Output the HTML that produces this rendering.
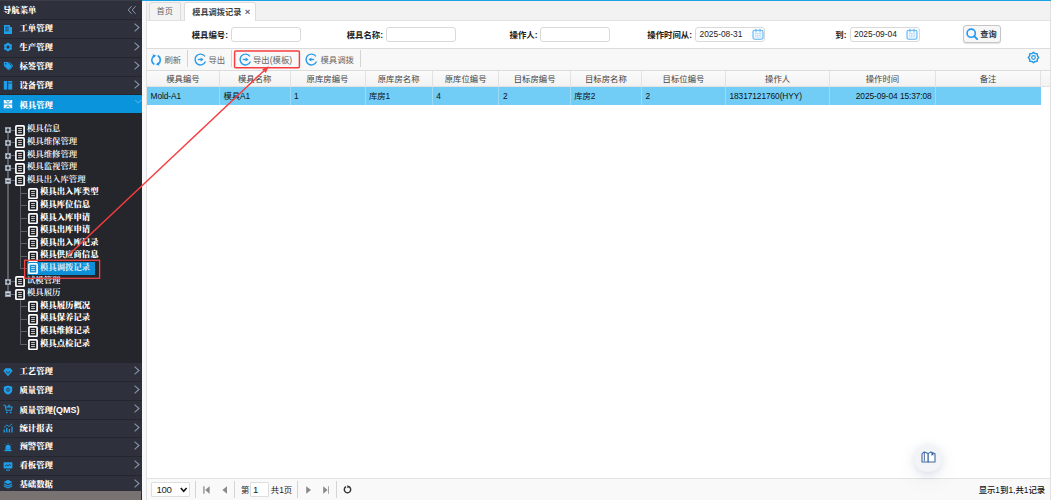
<!DOCTYPE html>
<html lang="zh-CN">
<head>
<meta charset="utf-8">
<title>模具调拨记录</title>
<style>
*{box-sizing:border-box;margin:0;padding:0}
html,body{width:1051px;height:500px;overflow:hidden;background:#fff;font-family:"Liberation Sans","Noto Sans CJK SC",sans-serif;font-size:8.4px;color:#222}
.abs{position:absolute}
#side{position:absolute;left:0;top:0;width:141.700px;height:500px;background:#25262b;overflow:hidden;font-family:"Liberation Serif","Noto Serif CJK SC",serif;color:#fff}
#side .hd{position:absolute;left:0;top:0;width:142px;height:19.300px;background:#2e303b;border-top:1px solid #3a3c47;font-weight:900;font-size:8.4px;line-height:20px;padding-left:3px}
#side .hd svg.dbl{position:absolute;left:127px;top:4px;width:10px;height:10px}
.acc{position:absolute;left:0;width:142px;height:18.800px;background:#2e303b;border-top:1px solid #24262e;font-weight:900;font-size:8.4px;line-height:18px;padding-left:19.5px;white-space:nowrap}
.acc.sel{background:#0a94dc;border-top-color:#0a94dc}
.acc svg.ic{position:absolute;left:2.600px;top:3.400px;width:10px;height:10px}
.acc svg.ar{position:absolute;left:133px;top:2px;width:7px;height:11px}
.acc .q{font-family:"Liberation Sans",sans-serif;font-weight:700;font-size:9px}
.tn{position:absolute;height:13px;line-height:13px;font-size:8.4px;white-space:nowrap;color:#fff;font-weight:600}
.tn.b{font-weight:900}
.tn.s{color:#cfe6f4}
.ln{position:absolute;background:#5c5e66}
#sbar{position:absolute;left:0;top:490.500px;width:141px;height:10px;background:#787272}
#gap{position:absolute;left:141.700px;top:0;width:4.900px;height:500px;background:#f8f8f8;border-right:1px solid #e0e0e0}
#topline{position:absolute;left:142px;top:0;width:909px;height:1.200px;background:#1ba3e6}
#tabs{position:absolute;left:146.600px;top:1px;width:904.400px;height:20px;background:#f2f2f2;border-bottom:1px solid #e2e2e2}
.tab{position:absolute;top:2px;height:18px;border:1px solid #dcdcdc;border-bottom:none;border-radius:3px 3px 0 0;background:#f3f3f3;color:#666;font-size:8.2px;line-height:17px;text-align:center;white-space:nowrap}
.tab.on{background:#fff;height:19px;color:#444;line-height:17.600px;font-weight:700;text-align:left;padding-left:7px}
.lbl{position:absolute;top:28px;height:15px;line-height:15px;font-weight:700;font-size:8.400px;white-space:nowrap;text-align:right;color:#222}
.inp{position:absolute;top:26.500px;height:15px;border:1px solid #d9d9d9;border-radius:3px;background:#fff;font-size:8.400px;line-height:13px;padding-left:3.500px;color:#222}
#tb{position:absolute;left:147px;top:47.500px;width:904px;height:23.200px;background:#f8f8f8;border-top:1px solid #dcdcdc;border-bottom:1px solid #dcdcdc}
.tbt{position:absolute;top:55px;height:10px;line-height:10px;font-size:8.400px;color:#666;white-space:nowrap}
.sep{position:absolute;width:1px;background:#d4d4d4}
#gh{position:absolute;left:147px;top:70.600px;width:904px;height:16.400px;background:linear-gradient(#fbfbfb,#f2f2f2);border-bottom:1px solid #e2e2e2}
.th{position:absolute;top:70.600px;height:16.400px;line-height:17.400px;text-align:center;font-size:8.400px;color:#444;border-right:1px solid #e2e2e2;white-space:nowrap}
#row{position:absolute;left:147px;top:87px;width:893.800px;height:17.500px;background:#72cdf6}
.td{position:absolute;top:87px;height:17.500px;line-height:19.500px;font-size:8.400px;color:#111;padding-left:3.500px;border-right:1px solid #9bdaf5;white-space:nowrap;letter-spacing:-.1px}
#pg{position:absolute;left:146.600px;top:477.600px;width:904.400px;height:22.400px;background:#f9f9f9;border-top:1px solid #e2e2e2}
.pt{position:absolute;top:484px;height:11px;line-height:11px;font-size:8.400px;color:#222;white-space:nowrap}
</style>
</head>
<body>
<div id="side">
<div class="hd">导航菜单<svg class="dbl" viewBox="0 0 10 10"><path d="M4.600 1.200L1.200 5l3.400 3.800M8.600 1.200L5.200 5l3.400 3.800" fill="none" stroke="#8a94a8" stroke-width="1"/></svg></div>
<div class="acc" style="top:19.3px"><svg class="ic" viewBox="0 0 10 10"><path d="M1 1h6v2h2v7H1z" fill="#1e9fea"/><path d="M2.2 3.2h3.6M2.2 5h3.6M2.2 6.8h3.6" stroke="#2f313d" stroke-width=".8"/></svg>工单管理<svg class="ar" viewBox="0 0 8 12"><path d="M1.800 1.600L6.800 6 1.800 10.400" fill="none" stroke="#8a94a8" stroke-width="1.300"/></svg></div>
<div class="acc" style="top:38.1px"><svg class="ic" viewBox="0 0 10 10"><g transform="translate(.5 .5) scale(.9)"><circle cx="5" cy="5" r="3.1" fill="none" stroke="#1e9fea" stroke-width="2.2"/><path d="M5 .3v9.4M.9 2.6l8.2 4.8M.9 7.4l8.2-4.8" stroke="#1e9fea" stroke-width="2"/><circle cx="5" cy="5" r="1.700" fill="#2f313d"/></g></svg>生产管理<svg class="ar" viewBox="0 0 8 12"><path d="M1.800 1.600L6.800 6 1.800 10.400" fill="none" stroke="#8a94a8" stroke-width="1.300"/></svg></div>
<div class="acc" style="top:56.9px"><svg class="ic" viewBox="0 0 10 10"><path d="M.8 1h4l4.2 4.2-3.8 3.8L.8 4.8z" fill="#1e9fea"/><circle cx="2.6" cy="2.8" r=".8" fill="#2f313d"/><path d="M6.5 1.2l3.3 3.6-3.6 4.4" stroke="#1e9fea" fill="none" stroke-width=".9"/></svg>标签管理<svg class="ar" viewBox="0 0 8 12"><path d="M1.800 1.600L6.800 6 1.800 10.400" fill="none" stroke="#8a94a8" stroke-width="1.300"/></svg></div>
<div class="acc" style="top:75.7px"><svg class="ic" viewBox="0 0 10 10"><rect x=".8" y="1" width="3.4" height="8.6" fill="#1e9fea"/><rect x="5.2" y="1" width="4" height="8.6" fill="#1e9fea"/><path d="M5.2 3h4" stroke="#2f313d" stroke-width=".7"/></svg>设备管理<svg class="ar" viewBox="0 0 8 12"><path d="M1.800 1.600L6.800 6 1.800 10.400" fill="none" stroke="#8a94a8" stroke-width="1.300"/></svg></div>
<div class="acc sel" style="top:94.500px;height:18.800px;line-height:20.600px"><svg class="ic" style="top:3.600px" viewBox="0 0 10 10"><path d="M.8 1h8.4v3.6H.8zM.8 5.6h8.4v3.6H.8z" fill="#fff"/><path d="M2.6 1.4l2.4 2 2.4-2M2.6 8.8l2.4-2 2.4 2" stroke="#0795dc" fill="none" stroke-width="1"/></svg>模具管理<svg class="ar" viewBox="0 0 12 8" style="left:133.500px;top:3.800px;width:8.500px;height:5.600px"><path d="M1.500 1.500L6 5.500 10.500 1.500" fill="none" stroke="#4ab2ea" stroke-width="1.500"/></svg></div>
<div class="acc" style="top:362.2px"><svg class="ic" viewBox="0 0 10 10"><path d="M2.4 1.2h5.2L9.6 4 5 9.2.4 4z" fill="#1e9fea"/><path d="M3 4l2 2.4L7 4" stroke="#2f313d" fill="none" stroke-width=".9"/></svg>工艺管理<svg class="ar" viewBox="0 0 8 12"><path d="M1.800 1.600L6.800 6 1.800 10.400" fill="none" stroke="#8a94a8" stroke-width="1.300"/></svg></div>
<div class="acc" style="top:381px"><svg class="ic" viewBox="0 0 10 10"><path d="M5 .6l4.2 1.2v3.4C9.2 7.4 7.4 9 5 9.6 2.6 9 .8 7.400 .8 5.200V1.800z" fill="#1e9fea"/><circle cx="5" cy="4.800" r="1.500" fill="none" stroke="#2f313d" stroke-width=".9"/></svg>质量管理<svg class="ar" viewBox="0 0 8 12"><path d="M1.800 1.600L6.800 6 1.800 10.400" fill="none" stroke="#8a94a8" stroke-width="1.300"/></svg></div>
<div class="acc" style="top:399.8px"><svg class="ic" viewBox="0 0 10 10"><path d="M.4 1.200h1.600l1.200 5h5l.9-3.200H3" stroke="#1e9fea" fill="none" stroke-width="1.100"/><circle cx="3.800" cy="8.400" r=".9" fill="#1e9fea"/><circle cx="7.600" cy="8.400" r=".9" fill="#1e9fea"/><path d="M6 .6v2.600M4.700 1.900h2.600" stroke="#1e9fea" stroke-width=".9"/></svg>质量管理<span class="q">(QMS)</span><svg class="ar" viewBox="0 0 8 12"><path d="M1.800 1.600L6.800 6 1.800 10.400" fill="none" stroke="#8a94a8" stroke-width="1.300"/></svg></div>
<div class="acc" style="top:418.6px"><svg class="ic" viewBox="0 0 10 10"><path d="M1.200 9.400V6.400M3.800 9.400V4.800M6.400 9.400V6M9 9.400V3.600" stroke="#1e9fea" stroke-width="1.300"/><path d="M.8 4.600l3-2.600 2.200 1.600L9.200.8" stroke="#1e9fea" fill="none" stroke-width=".9"/></svg>统计报表<svg class="ar" viewBox="0 0 8 12"><path d="M1.800 1.600L6.800 6 1.800 10.400" fill="none" stroke="#8a94a8" stroke-width="1.300"/></svg></div>
<div class="acc" style="top:437.4px"><svg class="ic" viewBox="0 0 10 10"><g transform="translate(.8 1) scale(.85)"><path d="M2 8V5.200a3 3 0 0 1 6 0V8z" fill="#1e9fea"/><rect x=".8" y="8" width="8.400" height="1.600" fill="#1e9fea"/><path d="M5 .2v1.200M1.200 1.600l.9.9M8.800 1.600l-.9.9" stroke="#1e9fea" stroke-width=".8"/></g></svg>预警管理<svg class="ar" viewBox="0 0 8 12"><path d="M1.800 1.600L6.800 6 1.800 10.400" fill="none" stroke="#8a94a8" stroke-width="1.300"/></svg></div>
<div class="acc" style="top:456.2px"><svg class="ic" viewBox="0 0 10 10"><rect x=".6" y="1.200" width="8.800" height="6.400" rx=".8" fill="#1e9fea"/><path d="M2 5.200l1.600-1.400 1.400 1.200 1.400-1.600L8 4.600" stroke="#2f313d" fill="none" stroke-width=".9"/><path d="M3 9.200h4" stroke="#1e9fea" stroke-width="1"/></svg>看板管理<svg class="ar" viewBox="0 0 8 12"><path d="M1.800 1.600L6.800 6 1.800 10.400" fill="none" stroke="#8a94a8" stroke-width="1.300"/></svg></div>
<div class="acc" style="top:475px"><svg class="ic" viewBox="0 0 10 10"><path d="M5 .8l4.400 2.200L5 5.200.6 3z" fill="#1e9fea"/><path d="M.8 5l4.200 2.100L9.200 5M.8 6.900L5 9l4.200-2.100" stroke="#1e9fea" fill="none" stroke-width="1.100"/></svg>基础数据<svg class="ar" viewBox="0 0 8 12"><path d="M1.800 1.600L6.800 6 1.800 10.400" fill="none" stroke="#8a94a8" stroke-width="1.300"/></svg></div>
<div class="ln" style="left:7.200px;top:130.3px;width:1.400px;height:163.8px"></div>
<div class="ln" style="left:11px;top:129.7px;width:4px;height:1.200px"></div>
<div class="ln" style="left:11px;top:142.3px;width:4px;height:1.200px"></div>
<div class="ln" style="left:11px;top:154.9px;width:4px;height:1.200px"></div>
<div class="ln" style="left:11px;top:167.5px;width:4px;height:1.200px"></div>
<div class="ln" style="left:11px;top:180.1px;width:4px;height:1.200px"></div>
<div class="ln" style="left:20.200px;top:192.7px;width:7px;height:1.200px"></div>
<div class="ln" style="left:20.200px;top:205.3px;width:7px;height:1.200px"></div>
<div class="ln" style="left:20.200px;top:217.9px;width:7px;height:1.200px"></div>
<div class="ln" style="left:20.200px;top:230.5px;width:7px;height:1.200px"></div>
<div class="ln" style="left:20.200px;top:243.1px;width:7px;height:1.200px"></div>
<div class="ln" style="left:20.200px;top:255.7px;width:7px;height:1.200px"></div>
<div class="ln" style="left:20.200px;top:268.3px;width:7px;height:1.200px"></div>
<div class="ln" style="left:11px;top:280.9px;width:4px;height:1.200px"></div>
<div class="ln" style="left:11px;top:293.5px;width:4px;height:1.200px"></div>
<div class="ln" style="left:20.200px;top:306.1px;width:7px;height:1.200px"></div>
<div class="ln" style="left:20.200px;top:318.7px;width:7px;height:1.200px"></div>
<div class="ln" style="left:20.200px;top:331.3px;width:7px;height:1.200px"></div>
<div class="ln" style="left:20.200px;top:343.9px;width:7px;height:1.200px"></div>
<div class="ln" style="left:20.200px;top:185.7px;width:1.200px;height:83.2px"></div>
<div class="ln" style="left:20.200px;top:299.1px;width:1.200px;height:45.4px"></div>
<svg class="abs" style="left:5px;top:127.3px;width:6px;height:6px" viewBox="0 0 7 7"><rect x=".4" y=".4" width="6.200" height="6.200" fill="#cdd6e2" stroke="#98a4b6" stroke-width=".8"/><path d="M1.600 3.500h3.800" stroke="#111" stroke-width="1.300"/><path d="M3.500 1.600v3.800" stroke="#111" stroke-width="1.300"/></svg>
<svg class="abs" style="left:15.2px;top:124.7px;width:10px;height:11.200px" viewBox="0 0 10 11.2"><rect x=".9" y=".9" width="8.200" height="9.400" rx=".8" fill="#1b1c20" stroke="#fff" stroke-width="1.700"/><path d="M3.100 3.600h3.800M3.100 5.600h3.800M3.100 7.600h3.800" stroke="#e8e8e8" stroke-width=".9"/></svg>
<div class="tn" style="left:27px;top:122.4px">模具信息</div>
<svg class="abs" style="left:5px;top:139.9px;width:6px;height:6px" viewBox="0 0 7 7"><rect x=".4" y=".4" width="6.200" height="6.200" fill="#cdd6e2" stroke="#98a4b6" stroke-width=".8"/><path d="M1.600 3.500h3.800" stroke="#111" stroke-width="1.300"/><path d="M3.500 1.600v3.800" stroke="#111" stroke-width="1.300"/></svg>
<svg class="abs" style="left:15.2px;top:137.3px;width:10px;height:11.200px" viewBox="0 0 10 11.2"><rect x=".9" y=".9" width="8.200" height="9.400" rx=".8" fill="#1b1c20" stroke="#fff" stroke-width="1.700"/><path d="M3.100 3.600h3.800M3.100 5.600h3.800M3.100 7.600h3.800" stroke="#e8e8e8" stroke-width=".9"/></svg>
<div class="tn" style="left:27px;top:135px">模具维保管理</div>
<svg class="abs" style="left:5px;top:152.5px;width:6px;height:6px" viewBox="0 0 7 7"><rect x=".4" y=".4" width="6.200" height="6.200" fill="#cdd6e2" stroke="#98a4b6" stroke-width=".8"/><path d="M1.600 3.500h3.800" stroke="#111" stroke-width="1.300"/><path d="M3.500 1.600v3.800" stroke="#111" stroke-width="1.300"/></svg>
<svg class="abs" style="left:15.2px;top:149.9px;width:10px;height:11.200px" viewBox="0 0 10 11.2"><rect x=".9" y=".9" width="8.200" height="9.400" rx=".8" fill="#1b1c20" stroke="#fff" stroke-width="1.700"/><path d="M3.100 3.600h3.800M3.100 5.600h3.800M3.100 7.600h3.800" stroke="#e8e8e8" stroke-width=".9"/></svg>
<div class="tn" style="left:27px;top:147.6px">模具维修管理</div>
<svg class="abs" style="left:5px;top:165.1px;width:6px;height:6px" viewBox="0 0 7 7"><rect x=".4" y=".4" width="6.200" height="6.200" fill="#cdd6e2" stroke="#98a4b6" stroke-width=".8"/><path d="M1.600 3.500h3.800" stroke="#111" stroke-width="1.300"/><path d="M3.500 1.600v3.800" stroke="#111" stroke-width="1.300"/></svg>
<svg class="abs" style="left:15.2px;top:162.5px;width:10px;height:11.200px" viewBox="0 0 10 11.2"><rect x=".9" y=".9" width="8.200" height="9.400" rx=".8" fill="#1b1c20" stroke="#fff" stroke-width="1.700"/><path d="M3.100 3.600h3.800M3.100 5.600h3.800M3.100 7.600h3.800" stroke="#e8e8e8" stroke-width=".9"/></svg>
<div class="tn" style="left:27px;top:160.2px">模具监视管理</div>
<svg class="abs" style="left:5px;top:177.7px;width:6px;height:6px" viewBox="0 0 7 7"><rect x=".4" y=".4" width="6.200" height="6.200" fill="#cdd6e2" stroke="#98a4b6" stroke-width=".8"/><path d="M1.600 3.500h3.800" stroke="#111" stroke-width="1.300"/></svg>
<svg class="abs" style="left:15.2px;top:175.1px;width:10px;height:11.200px" viewBox="0 0 10 11.2"><rect x=".9" y=".9" width="8.200" height="9.400" rx=".8" fill="#1b1c20" stroke="#fff" stroke-width="1.700"/><path d="M3.100 3.600h3.800M3.100 5.600h3.800M3.100 7.600h3.800" stroke="#e8e8e8" stroke-width=".9"/></svg>
<div class="tn" style="left:27px;top:172.8px">模具出入库管理</div>
<svg class="abs" style="left:27.8px;top:187.7px;width:10px;height:11.200px" viewBox="0 0 10 11.2"><rect x=".9" y=".9" width="8.200" height="9.400" rx=".8" fill="#1b1c20" stroke="#fff" stroke-width="1.700"/><path d="M3.100 3.600h3.800M3.100 5.600h3.800M3.100 7.600h3.800" stroke="#e8e8e8" stroke-width=".9"/></svg>
<div class="tn b" style="left:40px;top:185.4px">模具出入库类型</div>
<svg class="abs" style="left:27.8px;top:200.3px;width:10px;height:11.200px" viewBox="0 0 10 11.2"><rect x=".9" y=".9" width="8.200" height="9.400" rx=".8" fill="#1b1c20" stroke="#fff" stroke-width="1.700"/><path d="M3.100 3.600h3.800M3.100 5.600h3.800M3.100 7.600h3.800" stroke="#e8e8e8" stroke-width=".9"/></svg>
<div class="tn b" style="left:40px;top:198px">模具库位信息</div>
<svg class="abs" style="left:27.8px;top:212.9px;width:10px;height:11.200px" viewBox="0 0 10 11.2"><rect x=".9" y=".9" width="8.200" height="9.400" rx=".8" fill="#1b1c20" stroke="#fff" stroke-width="1.700"/><path d="M3.100 3.600h3.800M3.100 5.600h3.800M3.100 7.600h3.800" stroke="#e8e8e8" stroke-width=".9"/></svg>
<div class="tn b" style="left:40px;top:210.6px">模具入库申请</div>
<svg class="abs" style="left:27.8px;top:225.5px;width:10px;height:11.200px" viewBox="0 0 10 11.2"><rect x=".9" y=".9" width="8.200" height="9.400" rx=".8" fill="#1b1c20" stroke="#fff" stroke-width="1.700"/><path d="M3.100 3.600h3.800M3.100 5.600h3.800M3.100 7.600h3.800" stroke="#e8e8e8" stroke-width=".9"/></svg>
<div class="tn b" style="left:40px;top:223.2px">模具出库申请</div>
<svg class="abs" style="left:27.8px;top:238.1px;width:10px;height:11.200px" viewBox="0 0 10 11.2"><rect x=".9" y=".9" width="8.200" height="9.400" rx=".8" fill="#1b1c20" stroke="#fff" stroke-width="1.700"/><path d="M3.100 3.600h3.800M3.100 5.600h3.800M3.100 7.600h3.800" stroke="#e8e8e8" stroke-width=".9"/></svg>
<div class="tn b" style="left:40px;top:235.8px">模具出入库记录</div>
<svg class="abs" style="left:27.8px;top:250.7px;width:10px;height:11.200px" viewBox="0 0 10 11.2"><rect x=".9" y=".9" width="8.200" height="9.400" rx=".8" fill="#1b1c20" stroke="#fff" stroke-width="1.700"/><path d="M3.100 3.600h3.800M3.100 5.600h3.800M3.100 7.600h3.800" stroke="#e8e8e8" stroke-width=".9"/></svg>
<div class="tn b" style="left:40px;top:248.4px">模具供应商信息</div>
<div class="abs" style="left:27.400px;top:262px;width:68px;height:12.800px;background:#0c8fd6"></div>
<svg class="abs" style="left:27.8px;top:263.3px;width:10px;height:11.200px" viewBox="0 0 10 11.2"><rect x=".9" y=".9" width="8.200" height="9.400" rx=".8" fill="none" stroke="#fff" stroke-width="1.700"/><path d="M3.100 3.600h3.800M3.100 5.600h3.800M3.100 7.600h3.800" stroke="#e8e8e8" stroke-width=".9"/></svg>
<div class="tn b s" style="left:40px;top:261px">模具调拨记录</div>
<svg class="abs" style="left:5px;top:278.5px;width:6px;height:6px" viewBox="0 0 7 7"><rect x=".4" y=".4" width="6.200" height="6.200" fill="#cdd6e2" stroke="#98a4b6" stroke-width=".8"/><path d="M1.600 3.500h3.800" stroke="#111" stroke-width="1.300"/><path d="M3.500 1.600v3.800" stroke="#111" stroke-width="1.300"/></svg>
<svg class="abs" style="left:15.2px;top:275.9px;width:10px;height:11.200px" viewBox="0 0 10 11.2"><rect x=".9" y=".9" width="8.200" height="9.400" rx=".8" fill="#1b1c20" stroke="#fff" stroke-width="1.700"/><path d="M3.100 3.600h3.800M3.100 5.600h3.800M3.100 7.600h3.800" stroke="#e8e8e8" stroke-width=".9"/></svg>
<div class="tn" style="left:27px;top:273.6px">试模管理</div>
<svg class="abs" style="left:5px;top:291.1px;width:6px;height:6px" viewBox="0 0 7 7"><rect x=".4" y=".4" width="6.200" height="6.200" fill="#cdd6e2" stroke="#98a4b6" stroke-width=".8"/><path d="M1.600 3.500h3.800" stroke="#111" stroke-width="1.300"/></svg>
<svg class="abs" style="left:15.2px;top:288.5px;width:10px;height:11.200px" viewBox="0 0 10 11.2"><rect x=".9" y=".9" width="8.200" height="9.400" rx=".8" fill="#1b1c20" stroke="#fff" stroke-width="1.700"/><path d="M3.100 3.600h3.800M3.100 5.600h3.800M3.100 7.600h3.800" stroke="#e8e8e8" stroke-width=".9"/></svg>
<div class="tn" style="left:27px;top:286.2px">模具履历</div>
<svg class="abs" style="left:27.8px;top:301.1px;width:10px;height:11.200px" viewBox="0 0 10 11.2"><rect x=".9" y=".9" width="8.200" height="9.400" rx=".8" fill="#1b1c20" stroke="#fff" stroke-width="1.700"/><path d="M3.100 3.600h3.800M3.100 5.600h3.800M3.100 7.600h3.800" stroke="#e8e8e8" stroke-width=".9"/></svg>
<div class="tn b" style="left:40px;top:298.8px">模具履历概况</div>
<svg class="abs" style="left:27.8px;top:313.7px;width:10px;height:11.200px" viewBox="0 0 10 11.2"><rect x=".9" y=".9" width="8.200" height="9.400" rx=".8" fill="#1b1c20" stroke="#fff" stroke-width="1.700"/><path d="M3.100 3.600h3.800M3.100 5.600h3.800M3.100 7.600h3.800" stroke="#e8e8e8" stroke-width=".9"/></svg>
<div class="tn b" style="left:40px;top:311.4px">模具保养记录</div>
<svg class="abs" style="left:27.8px;top:326.3px;width:10px;height:11.200px" viewBox="0 0 10 11.2"><rect x=".9" y=".9" width="8.200" height="9.400" rx=".8" fill="#1b1c20" stroke="#fff" stroke-width="1.700"/><path d="M3.100 3.600h3.800M3.100 5.600h3.800M3.100 7.600h3.800" stroke="#e8e8e8" stroke-width=".9"/></svg>
<div class="tn b" style="left:40px;top:324px">模具维修记录</div>
<svg class="abs" style="left:27.8px;top:338.9px;width:10px;height:11.200px" viewBox="0 0 10 11.2"><rect x=".9" y=".9" width="8.200" height="9.400" rx=".8" fill="#1b1c20" stroke="#fff" stroke-width="1.700"/><path d="M3.100 3.600h3.800M3.100 5.600h3.800M3.100 7.600h3.800" stroke="#e8e8e8" stroke-width=".9"/></svg>
<div class="tn b" style="left:40px;top:336.6px">模具点检记录</div>
<div id="sbar"></div>
</div>
<div id="gap"></div>
<div id="topline"></div>
<div id="tabs"></div>
<div class="tab" style="left:149px;width:31.500px">首页</div>
<div class="tab on" style="left:184.200px;width:72px">模具调拨记录<span style="font-weight:700;font-size:9.500px;color:#5a6270;margin-left:3.300px">×</span></div>

<div class="lbl" style="left:170px;width:58px">模具编号:</div>
<div class="inp" style="left:231px;width:70px"></div>
<div class="lbl" style="left:325px;width:58px">模具名称:</div>
<div class="inp" style="left:385.500px;width:70px"></div>
<div class="lbl" style="left:480px;width:57.500px">操作人:</div>
<div class="inp" style="left:540.200px;width:70px"></div>
<div class="lbl" style="left:620px;width:72px">操作时间从:</div>
<div class="inp" style="left:695px;width:70px">2025-08-31</div>
<div class="lbl" style="left:800px;width:46.500px">到:</div>
<div class="inp" style="left:849.500px;width:70px">2025-09-04</div>
<svg class="abs cal" style="left:751.500px;top:28px;width:12px;height:12px" viewBox="0 0 12 12"><rect x="1" y="2.200" width="10" height="9" rx="1.600" fill="#f4faff" stroke="#5ab4f5" stroke-width="1.100"/><path d="M4 .8v3.600M8 .8v3.600" stroke="#5ab4f5" stroke-width="1"/><path d="M3.200 5.600h6M3.200 7.300h6M3.200 9h6" stroke="#8ccaf7" stroke-width=".9" stroke-dasharray="1 .7"/></svg>
<svg class="abs cal" style="left:906.200px;top:28px;width:12px;height:12px" viewBox="0 0 12 12"><rect x="1" y="2.200" width="10" height="9" rx="1.600" fill="#f4faff" stroke="#5ab4f5" stroke-width="1.100"/><path d="M4 .8v3.600M8 .8v3.600" stroke="#5ab4f5" stroke-width="1"/><path d="M3.200 5.600h6M3.200 7.300h6M3.200 9h6" stroke="#8ccaf7" stroke-width=".9" stroke-dasharray="1 .7"/></svg>
<div class="abs" style="left:963px;top:25px;width:37.500px;height:18px;border:1px solid #c6c6c6;border-radius:3px;background:#f7f7f7;box-shadow:0 1px 1px rgba(0,0,0,.12)"></div>
<svg class="abs" style="left:966px;top:28px;width:12px;height:12px" viewBox="0 0 12 12"><circle cx="5.200" cy="5.200" r="4.100" fill="none" stroke="#2299f2" stroke-width="1.600"/><path d="M8.200 8.200l3 3" stroke="#2299f2" stroke-width="1.900" stroke-linecap="round"/></svg>
<div class="abs" style="left:980.300px;top:29.200px;height:12px;line-height:12px;font-weight:700;font-size:8.200px;color:#333">查询</div>

<div id="tb"></div>
<svg class="abs" style="left:150px;top:53.500px;width:12px;height:12px" viewBox="0 0 12 12"><path d="M4.300 10.500A5.100 5.100 0 0 1 3.900 1.900" fill="none" stroke="#2299f2" stroke-width="1.600"/><path d="M7.700 1.500A5.100 5.100 0 0 1 8.100 10.100" fill="none" stroke="#2299f2" stroke-width="1.600"/><path d="M2.600 .3l3.600 1.300-2.600 2.400zM9.400 11.700L5.800 10.400l2.600-2.400z" fill="#2299f2"/></svg>
<div class="tbt" style="left:164.500px">刷新</div>
<div class="sep" style="left:187px;top:50px;height:17px"></div>
<svg class="abs" style="left:193.600px;top:53.300px;width:13px;height:13px" viewBox="0 0 13 13"><path d="M10.900 3.400A5.400 5.400 0 1 0 11.500 8.600" fill="none" stroke="#2b9be8" stroke-width="1.400"/><path d="M3.800 6.500h3.400" stroke="#2b9be8" stroke-width="1.300"/><path d="M6.600 4.500L9.600 6.500 6.600 8.500z" fill="#2b9be8"/></svg>
<div class="tbt" style="left:208.500px">导出</div>
<div class="sep" style="left:231px;top:50px;height:17px"></div>
<svg class="abs" style="left:238.600px;top:53.300px;width:13px;height:13px" viewBox="0 0 13 13"><path d="M10.900 3.400A5.400 5.400 0 1 0 11.500 8.600" fill="none" stroke="#2b9be8" stroke-width="1.400"/><path d="M3.800 6.500h3.400" stroke="#2b9be8" stroke-width="1.300"/><path d="M6.600 4.500L9.600 6.500 6.600 8.500z" fill="#2b9be8"/></svg>
<div class="tbt" style="left:253px">导出(模板)</div>
<svg class="abs" style="left:304.600px;top:53.300px;width:13px;height:13px" viewBox="0 0 13 13"><path d="M10.900 3.400A5.400 5.400 0 1 0 11.500 8.600" fill="none" stroke="#2b9be8" stroke-width="1.400"/><path d="M9.200 6.500H5.800" stroke="#2b9be8" stroke-width="1.300"/><path d="M6.400 4.500L3.400 6.500 6.400 8.500z" fill="#2b9be8"/></svg>
<div class="tbt" style="left:320.500px">模具调拨</div>
<div class="sep" style="left:360px;top:50px;height:17px"></div>
<svg class="abs" style="left:1027.100px;top:51.400px;width:13px;height:13px" viewBox="0 0 13 13"><path d="M6.50 1.30L8.11 2.62L10.18 2.82L10.38 4.89L11.70 6.50L10.38 8.11L10.18 10.18L8.11 10.38L6.50 11.70L4.89 10.38L2.82 10.18L2.62 8.11L1.30 6.50L2.62 4.89L2.82 2.82L4.89 2.62z" fill="none" stroke="#2b9be4" stroke-width="1.500" stroke-linejoin="round"/><circle cx="6.500" cy="6.500" r="1.800" fill="none" stroke="#2b9be4" stroke-width="1.200"/></svg>

<div id="gh"></div>
<div class="th" style="left:147px;width:73px">模具编号</div>
<div class="th" style="left:220px;width:70.500px">模具名称</div>
<div class="th" style="left:290.500px;width:75px">原库房编号</div>
<div class="th" style="left:365.500px;width:67.200px">原库房名称</div>
<div class="th" style="left:432.700px;width:66.800px">原库位编号</div>
<div class="th" style="left:499.500px;width:71.200px">目标房编号</div>
<div class="th" style="left:570.700px;width:71.400px">目标房名称</div>
<div class="th" style="left:642.100px;width:83.900px">目标位编号</div>
<div class="th" style="left:726px;width:104.200px">操作人</div>
<div class="th" style="left:830.200px;width:105.500px">操作时间</div>
<div class="th" style="left:935.700px;width:105.800px">备注</div>
<div id="row"></div>
<div class="td" style="left:147px;width:73px">Mold-A1</div>
<div class="td" style="left:220px;width:70.500px">模具A1</div>
<div class="td" style="left:290.500px;width:75px">1</div>
<div class="td" style="left:365.500px;width:67.200px">库房1</div>
<div class="td" style="left:432.700px;width:66.800px">4</div>
<div class="td" style="left:499.500px;width:71.200px">2</div>
<div class="td" style="left:570.700px;width:71.400px">库房2</div>
<div class="td" style="left:642.100px;width:83.900px">2</div>
<div class="td" style="left:726px;width:104.200px">18317121760(HYY)</div>
<div class="td" style="left:830.200px;width:105.500px;text-align:right;padding-right:3px">2025-09-04 15:37:08</div>
<div class="td" style="left:935.700px;width:105.800px;border-right:none"></div>

<div id="pg"></div>
<div class="abs" style="left:151.200px;top:482.300px;width:38.600px;height:14.500px;border:1px solid #dedede;border-radius:1px;background:#fff"></div>
<div class="pt" style="left:156.600px;top:484.400px;font-size:9.600px;letter-spacing:-.35px">100</div>
<svg class="abs" style="left:180.300px;top:487px;width:7.400px;height:5.600px" viewBox="0 0 7.4 5.6"><path d="M.8 1L3.700 4.200 6.600 1" fill="none" stroke="#111" stroke-width="1.600"/></svg>
<div class="sep" style="left:195.100px;top:481px;height:17px"></div>
<svg class="abs" style="left:203px;top:485.600px;width:6.800px;height:8px" viewBox="0 0 6.8 8"><path d="M.9 .2v7.600" stroke="#8a8a8a" stroke-width="1.300"/><path d="M6.600 .2v7.600L2.200 4z" fill="#8a8a8a"/></svg>
<svg class="abs" style="left:222px;top:485.600px;width:5.400px;height:8px" viewBox="0 0 5.400 8"><path d="M5.200 .2v7.600L.4 4z" fill="#8a8a8a"/></svg>
<div class="sep" style="left:234.100px;top:481px;height:17px"></div>
<div class="pt" style="left:241px;top:485.200px">第</div>
<div class="abs" style="left:250.200px;top:482.300px;width:19.200px;height:14.500px;border:1px solid #dedede;border-radius:1px;background:#fff"></div>
<div class="pt" style="left:253px;top:484.400px;font-size:9.600px">1</div>
<div class="pt" style="left:270.800px;top:485.200px">共1页</div>
<div class="sep" style="left:296.600px;top:481px;height:17px"></div>
<svg class="abs" style="left:305.800px;top:485.600px;width:5.400px;height:8px" viewBox="0 0 5.400 8"><path d="M.2 .2v7.600L5 4z" fill="#8a8a8a"/></svg>
<svg class="abs" style="left:322.600px;top:485.600px;width:6.800px;height:8px" viewBox="0 0 6.8 8"><path d="M5.900 .2v7.600" stroke="#8a8a8a" stroke-width="1.300"/><path d="M.2 .2v7.600L4.600 4z" fill="#8a8a8a"/></svg>
<div class="sep" style="left:335.800px;top:481px;height:17px"></div>
<svg class="abs" style="left:342.500px;top:484.800px;width:9px;height:9px" viewBox="0 0 9 9"><path d="M5.900 1.700A3.200 3.200 0 1 1 3.100 1.700" fill="none" stroke="#333" stroke-width="1.400"/><path d="M4.400 0l2.400 1.700-2.400 1.500z" fill="#333"/></svg>
<div class="pt" style="left:959.200px;top:484.800px;width:86px;text-align:right;color:#111;font-weight:500">显示1到1,共1记录</div>

<div class="abs" style="left:913.700px;top:444.100px;width:28px;height:28px;border-radius:50%;background:#f3f4f7;box-shadow:0 3px 9px rgba(80,100,140,.16),0 8px 22px rgba(80,100,140,.07)"></div>
<svg class="abs" style="left:920.500px;top:450.800px;width:15px;height:12px" viewBox="0 0 15 12"><path d="M1 2.800L3.200 .9 7.200 2.600V11L1 11z" fill="#fff" stroke="#3f68a3" stroke-width="1.100" stroke-linejoin="round"/><path d="M3.300 1.200V10.200" stroke="#3f68a3" stroke-width="1"/><path d="M7.200 2.600L9.800 .9 14 2.800V11H7.200z" fill="#fff" stroke="#3f68a3" stroke-width="1.100" stroke-linejoin="round"/><path d="M10.400 1.600v3.200l1-.7 1 .7V2.200z" fill="#3f68a3"/></svg>

<svg class="abs" style="left:0;top:0;width:1051px;height:500px;pointer-events:none" viewBox="0 0 1051 500">
<rect x="24.600" y="260.300" width="75" height="18" fill="none" stroke="#ec4646" stroke-width="1.300"/>
<rect x="234.600" y="51" width="64.800" height="16.700" rx="1" fill="none" stroke="#f73c3e" stroke-width="1.450"/>
<path d="M68 255.500L267.500 67.400" stroke="#f53d40" stroke-width="1.400" fill="none"/>
<path d="M268.800 66.200l-6.600 3 3.700 3.700z" fill="#ee4448"/>
</svg>

<div class="abs" style="left:1049.600px;top:1px;width:1px;height:499px;background:#e0e0e0"></div>

</body>
</html>
